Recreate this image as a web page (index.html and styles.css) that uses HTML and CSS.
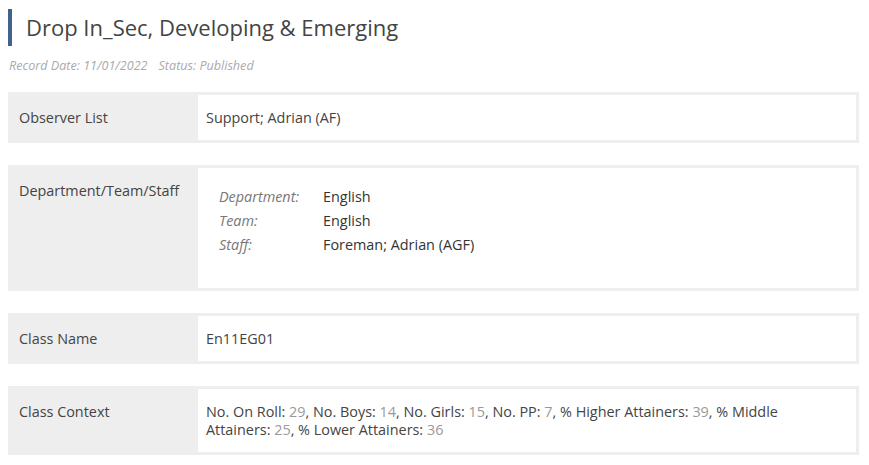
FILE: index.html
```html
<!DOCTYPE html>
<html lang="en">
<head>
<meta charset="utf-8">
<title>Drop In_Sec, Developing &amp; Emerging</title>
<link rel="stylesheet" href="styles.css">
</head>
<body>
<h1 class="title">Drop In_Sec, Developing &amp; Emerging</h1>
<div class="meta"><span>Record Date: 11/01/2022</span><span>Status: Published</span></div>

<div class="row">
  <div class="label">Observer List</div>
  <div class="value">Support; Adrian (AF)</div>
</div>

<div class="row">
  <div class="label">Department/Team/Staff</div>
  <div class="value">
    <dl class="dts">
      <dt>Department:</dt><dd>English</dd>
      <dt>Team:</dt><dd>English</dd>
      <dt>Staff:</dt><dd>Foreman; Adrian (AGF)</dd>
    </dl>
  </div>
</div>

<div class="row">
  <div class="label">Class Name</div>
  <div class="value">En11EG01</div>
</div>

<div class="row">
  <div class="label">Class Context</div>
  <div class="value">No. On Roll: <span class="num">29</span>, No. Boys: <span class="num">14</span>, No. Girls: <span class="num">15</span>, No. PP: <span class="num">7</span>, % Higher Attainers: <span class="num">39</span>, % Middle Attainers: <span class="num">25</span>, % Lower Attainers: <span class="num">36</span></div>
</div>
</body>
</html>
```

FILE: styles.css
```css
html, body {
  background: #ffffff;
}
body {
  margin: 0;
  padding: 9px 10px 0 8px;
  font-family: "Open Sans", "Liberation Sans", sans-serif;
  font-size: 14.4px;
  color: #444444;
}
.title {
  margin: 0;
  height: 37px;
  line-height: 37px;
  border-left: 4px solid #41628a;
  padding-left: 14px;
  font-size: 22px;
  font-weight: 400;
  color: #444444;
}
.meta {
  margin-top: 11px;
  line-height: 18px;
  font-size: 12.6px;
  font-style: italic;
  color: #aaaaaa;
  padding-left: 1px;
}
.meta span + span {
  margin-left: 11px;
}
.row {
  display: flex;
  margin-top: 17px;
  margin-bottom: 22px;
  border: 3px solid #eeeeee;
  background: #ffffff;
  line-height: 18px;
}
.row + .row {
  margin-top: 0;
}
.label {
  flex: 0 0 187px;
  box-sizing: border-box;
  background: #eeeeee;
  padding: 14px 8px 13px 8px;
  color: #444444;
}
.value {
  flex: 1;
  padding: 14px 16px 13px 8px;
  color: #444444;
}
.num {
  color: #999999;
}
.dts {
  display: grid;
  grid-template-columns: 104px 1fr;
  row-gap: 6px;
  margin: 6px 0 21px 13px;
}
.dts dt {
  font-style: italic;
  color: #777777;
}
.dts dd {
  margin: 0;
  color: #333333;
}
```
